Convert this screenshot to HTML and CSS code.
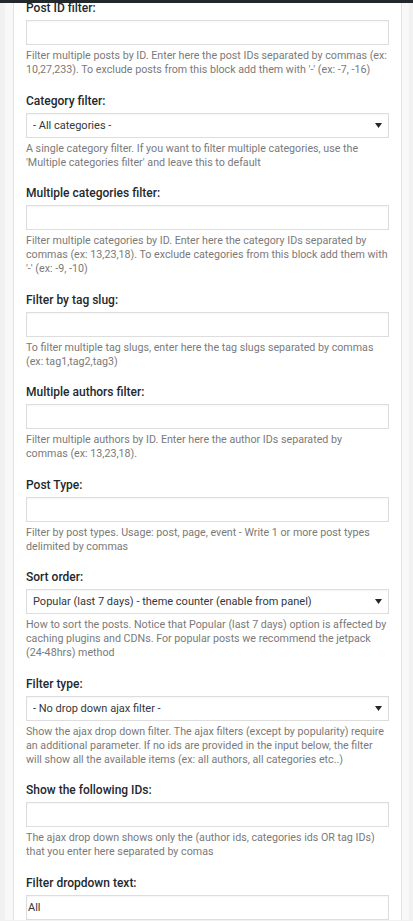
FILE: index.html
```html
<!DOCTYPE html>
<html lang="en">
<head>
    <meta charset="UTF-8">
    <meta name="viewport" content="width=device-width, initial-scale=1.0">
    <title>Block Settings</title>
    <link rel="stylesheet" href="styles.css">
</head>
<body>

<div class="admin-bar"></div>

<div class="frame">
    <div class="panel">

        <div class="field">
            <label for="post_ids">Post ID filter:</label>
            <input type="text" id="post_ids">
            <p class="desc">Filter multiple posts by ID. Enter here the post IDs separated by commas (ex: 10,27,233). To exclude posts from this block add them with '-' (ex: -7, -16)</p>
        </div>

        <div class="field">
            <label for="category_id">Category filter:</label>
            <div class="select-wrap">
                <select id="category_id">
                    <option>- All categories -</option>
                </select>
                <svg class="arrow" width="7" height="5" viewBox="0 0 7 5"><path d="M0 0h7L3.5 5z"/></svg>
            </div>
            <p class="desc">A single category filter. If you want to filter multiple categories, use the 'Multiple categories filter' and leave this to default</p>
        </div>

        <div class="field">
            <label for="category_ids">Multiple categories filter:</label>
            <input type="text" id="category_ids">
            <p class="desc">Filter multiple categories by ID. Enter here the category IDs separated by commas (ex: 13,23,18). To exclude categories from this block add them with '-' (ex: -9, -10)</p>
        </div>

        <div class="field">
            <label for="tag_slug">Filter by tag slug:</label>
            <input type="text" id="tag_slug">
            <p class="desc">To filter multiple tag slugs, enter here the tag slugs separated by commas (ex: tag1,tag2,tag3)</p>
        </div>

        <div class="field">
            <label for="autors_id">Multiple authors filter:</label>
            <input type="text" id="autors_id">
            <p class="desc">Filter multiple authors by ID. Enter here the author IDs separated by<br>commas (ex: 13,23,18).</p>
        </div>

        <div class="field">
            <label for="post_types">Post Type:</label>
            <input type="text" id="post_types">
            <p class="desc">Filter by post types. Usage: post, page, event - Write 1 or more post types delimited by commas</p>
        </div>

        <div class="field">
            <label for="sort">Sort order:</label>
            <div class="select-wrap">
                <select id="sort">
                    <option>Popular (last 7 days) - theme counter (enable from panel)</option>
                </select>
                <svg class="arrow" width="7" height="5" viewBox="0 0 7 5"><path d="M0 0h7L3.5 5z"/></svg>
            </div>
            <p class="desc">How to sort the posts. Notice that Popular (last 7 days) option is affected by caching plugins and CDNs. For popular posts we recommend the jetpack (24-48hrs) method</p>
        </div>

        <div class="field">
            <label for="ajax_filter_type">Filter type:</label>
            <div class="select-wrap">
                <select id="ajax_filter_type">
                    <option>- No drop down ajax filter -</option>
                </select>
                <svg class="arrow" width="7" height="5" viewBox="0 0 7 5"><path d="M0 0h7L3.5 5z"/></svg>
            </div>
            <p class="desc">Show the ajax drop down filter. The ajax filters (except by popularity) require an additional parameter. If no ids are provided in the input below, the filter<br>will show all the available items (ex: all authors, all categories etc..)</p>
        </div>

        <div class="field">
            <label for="ajax_filter_ids">Show the following IDs:</label>
            <input type="text" id="ajax_filter_ids">
            <p class="desc">The ajax drop down shows only the (author ids, categories ids OR tag IDs) that you enter here separated by comas</p>
        </div>

        <div class="field">
            <label for="td_filter_default_txt">Filter dropdown text:</label>
            <input type="text" id="td_filter_default_txt" value="All">
        </div>

    </div>
</div>

</body>
</html>
```

FILE: styles.css
```css
body {
    margin: 0;
    background-color: #f1f1f1;
    font-family: Roboto, "Noto Sans", sans-serif;
    color: #32373c;
}
.admin-bar {
    position: fixed;
    top: 0;
    left: 0;
    right: 0;
    height: 3px;
    background-color: #23282d;
    z-index: 10;
}
.frame {
    width: 389px;
    margin-left: 5px;
    padding: 0 7px 0 8px;
    background-color: #f8f8f8;
    min-height: 100vh;
}
.panel {
    background-color: #fff;
    border-left: 1px solid #e2e2e2;
    border-right: 1px solid #e2e2e2;
    padding: 0 12px;
    min-height: 100vh;
    box-sizing: border-box;
}
.field {
    display: flex;
    flex-direction: column;
    margin-bottom: 14.5px;
}
.field:first-child {
    margin-top: -1px;
}
label {
    font-size: 12px;
    font-weight: 500;
    line-height: 18px;
    color: #23282d;
    margin-bottom: 3px;
}
input[type="text"], select {
    box-sizing: border-box;
    width: 100%;
    height: 25px;
    margin: 0;
    border: 1px solid #ddd;
    border-radius: 0;
    box-shadow: inset 0 1px 2px rgba(0, 0, 0, .04);
    background-color: #fff;
    font-family: inherit;
    font-size: 11px;
    color: #32373c;
    outline: none;
}
input[type="text"] {
    padding: 0 1px;
}
select {
    -webkit-appearance: none;
    appearance: none;
    padding: 0 20px 0 6px;
}
.select-wrap {
    position: relative;
}
.arrow {
    position: absolute;
    right: 7px;
    top: 10px;
    fill: #23282d;
}
.desc {
    margin: 4px -3px 0 0;
    font-size: 10.7px;
    line-height: 14px;
    color: #7a7a7a;
}
```
